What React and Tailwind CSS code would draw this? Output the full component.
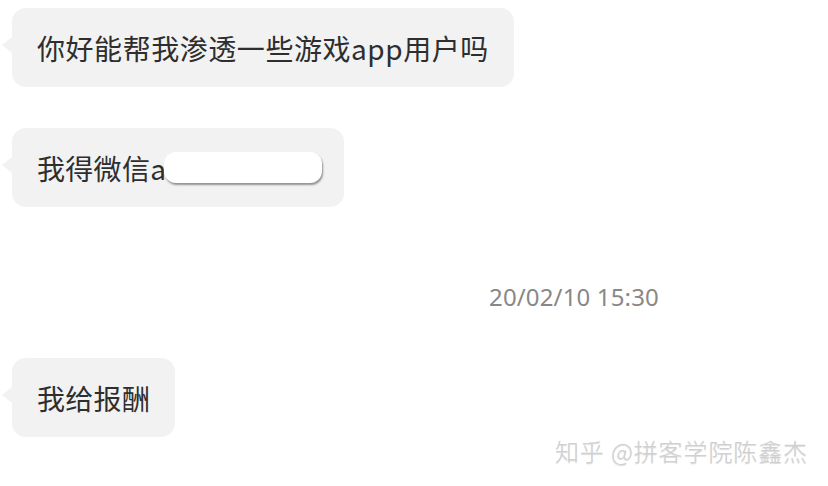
import React from 'react';

const font = { fontFamily: '"Noto Sans CJK SC", "Noto Sans", sans-serif' };

function Bubble({ children, className = '' }) {
    return (
        <div className={`relative self-start h-[79px] flex items-center rounded-[14px] bg-[#f2f2f2] pl-[25px] text-[28px] leading-none text-[#2e2e2e] ${className}`}>
            {/* tail */}
            <span className="absolute left-[-10px] top-[29px] w-0 h-0 border-y-[8px] border-y-transparent border-r-[10px] border-r-[#f2f2f2]" />
            {children}
        </div>
    );
}

export default function App() {
    return (
        <div className="relative w-[828px] h-[486px] overflow-hidden bg-white" style={font}>
            <div className="flex flex-col pt-[8px] pl-[12px]">
                <Bubble className="pr-[25px]">
                    <span className="tracking-[0.55px]">你好能帮我渗透一些游戏app用户吗</span>
                </Bubble>

                <Bubble className="mt-[41px] pr-[22px]">
                    <span className="tracking-[0.3px]">我得微信a</span>
                    <span className="inline-block ml-[-2px] w-[158px] h-[31px] rounded-[12px] bg-white shadow-[1px_2px_2px_rgba(0,0,0,0.4)]" />
                </Bubble>

                {/* timestamp */}
                <div className="mt-[75px] ml-[477px] h-[30px] flex items-center text-[24px] tracking-[0.15px] text-[#888]" style={{ fontFamily: '"Noto Sans", sans-serif' }}>
                    20/02/10 15:30
                </div>

                <Bubble className="mt-[46px] pr-[25px]">
                    <span className="tracking-[0.3px]">我给报酬</span>
                </Bubble>
            </div>

            {/* watermark */}
            <div className="absolute right-[20px] top-[437px] text-[24px] leading-[28px] tracking-[0.9px] font-light text-[#d0d0d0] [text-shadow:0_1px_1px_rgba(0,0,0,0.15)]">
                知乎 @拼客学院陈鑫杰
            </div>
        </div>
    );
}
